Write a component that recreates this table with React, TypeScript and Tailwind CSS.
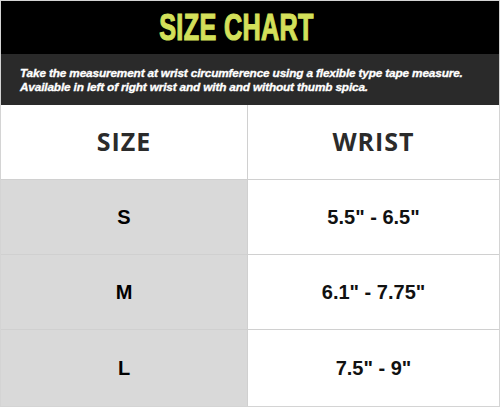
import { Fragment } from "react";

const rows = [
  { size: "S", wrist: '5.5" - 6.5"' },
  { size: "M", wrist: '6.1" - 7.75"' },
  { size: "L", wrist: '7.5" - 9"' },
];

export default function App() {
  return (
    <div className="w-[500px] h-[407px] border border-[#d4d4d4] bg-white flex flex-col overflow-hidden font-['Liberation_Sans',Arial,sans-serif]">
      <div className="h-[53px] bg-black flex items-center justify-center shrink-0">
        <h1 className="inline-block mr-[27px] scale-x-[0.7] text-[36px] font-bold leading-none text-[#d3e05a] [-webkit-text-stroke:1.2px_#d3e05a] tracking-[0.5px] pt-[1px]">
          SIZE CHART
        </h1>
      </div>
      <div className="h-[51px] bg-[#2a2a2a] px-[19px] flex flex-col justify-center text-white italic font-bold text-[11.8px] leading-[14px] [-webkit-text-stroke:0.35px_white] tracking-[-0.15px] shrink-0">
        <p>Take the measurement at wrist circumference using a flexible type tape measure.</p>
        <p>Available in left of right wrist and with and without thumb spica.</p>
      </div>
      <div className="grid grid-cols-[247px_1fr] grid-rows-[75px_75px_75px_1fr] flex-1">
        <div className="flex items-center justify-center border-r border-b border-[#d0d0d0] text-[25px] font-bold text-[#2b2b2b] tracking-[1px] font-['Open_Sans','Liberation_Sans',sans-serif]">
          SIZE
        </div>
        <div className="flex items-center justify-center border-b border-[#d0d0d0] text-[25px] font-bold text-[#2b2b2b] tracking-[1px] font-['Open_Sans','Liberation_Sans',sans-serif]">
          WRIST
        </div>
        {rows.map((r, i) => (
          <Fragment key={r.size}>
            <div
              className={
                i < 2
                  ? "flex items-center justify-center bg-[#d9d9d9] border-r border-b border-[#d0d0d0] text-[20px] font-bold text-black"
                  : "flex items-center justify-center bg-[#d9d9d9] border-r border-[#d0d0d0] text-[20px] font-bold text-black"
              }
            >
              {r.size}
            </div>
            <div
              className={
                i < 2
                  ? "flex items-center justify-center border-b border-[#d0d0d0] text-[20px] font-bold text-[#111]"
                  : "flex items-center justify-center text-[20px] font-bold text-[#111]"
              }
            >
              {r.wrist}
            </div>
          </Fragment>
        ))}
      </div>
    </div>
  );
}
